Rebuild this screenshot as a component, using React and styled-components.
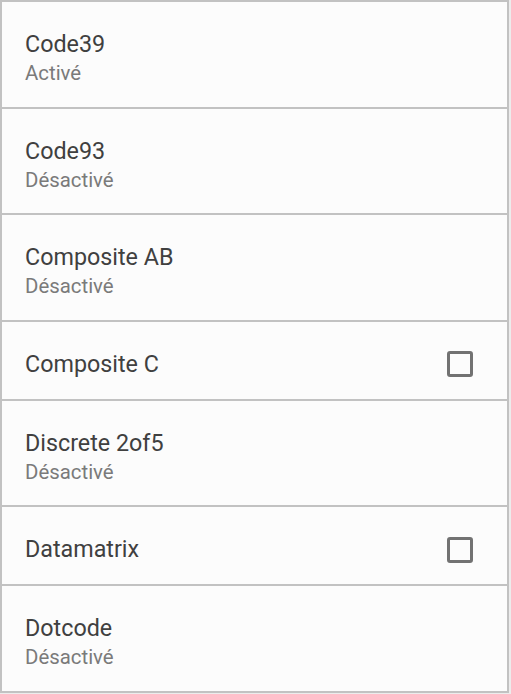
import React from "react";
import styled, { createGlobalStyle } from "styled-components";

const Global = createGlobalStyle`
  html, body { margin: 0; padding: 0; background: #ececec; }
  body { font-family: Roboto, "Noto Sans", sans-serif; }
`;

const List = styled.div`
  width: 509px;
  box-sizing: border-box;
  border: 2px solid #c2c2c2;
  background: #fcfcfc;
  display: flex;
  flex-direction: column;
`;

const Row = styled.div`
  height: ${(p) => (p.$single ? 77 : 104.5)}px;
  flex: none;
  display: flex;
  align-items: center;
  padding: 0 34px 0 23px;
  border-top: ${(p) => (p.$first ? "none" : "2px solid #c2c2c2")};
`;

const Texts = styled.div`
  flex: 1;
  display: flex;
  flex-direction: column;
  padding-top: ${(p) => (p.$single ? 8 : 9)}px;
`;

const Title = styled.div`
  font-size: 23.3px;
  line-height: 29px;
  color: #404040;
`;

const Summary = styled.div`
  font-size: 20.4px;
  line-height: 27px;
  margin-top: 1px;
  color: #7a7a7a;
`;

const Box = styled.div`
  width: 20px;
  height: 20px;
  margin-top: 8px;
  border: 3px solid #727272;
  border-radius: 3px;
`;

const items = [
  { t: "Code39", s: "Activé" },
  { t: "Code93", s: "Désactivé" },
  { t: "Composite AB", s: "Désactivé" },
  { t: "Composite C", check: true },
  { t: "Discrete 2of5", s: "Désactivé" },
  { t: "Datamatrix", check: true },
  { t: "Dotcode", s: "Désactivé" },
];

export default function App() {
  return (
    <>
      <Global />
      <List>
        {items.map((it, i) => (
          <Row key={it.t} $first={i === 0} $single={!!it.check}>
            <Texts $single={!!it.check}>
              <Title>{it.t}</Title>
              {it.s && <Summary>{it.s}</Summary>}
            </Texts>
            {it.check && <Box />}
          </Row>
        ))}
      </List>
    </>
  );
}
